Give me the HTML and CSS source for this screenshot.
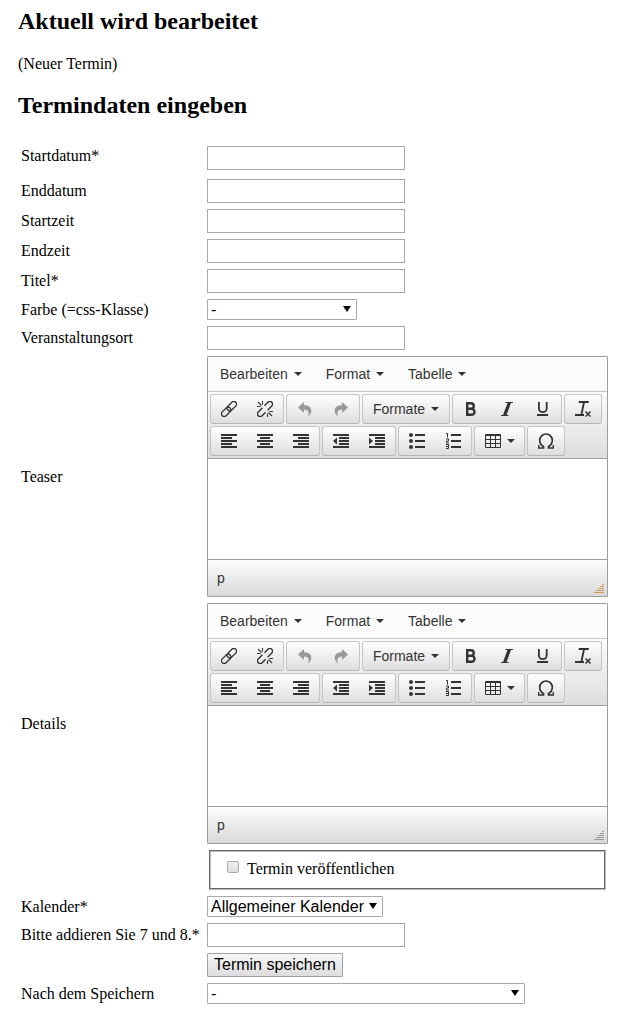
FILE: index.html
```html
<!DOCTYPE html>
<html lang="de">
<head>
<meta charset="utf-8">
<title>Termin bearbeiten</title>
<link rel="stylesheet" href="styles.css">
</head>
<body>
<svg class="sprite" aria-hidden="true">
  <symbol id="i-link" viewBox="0 0 16 16"><g fill="none" stroke="currentColor" stroke-width="1.3" transform="rotate(-45 8 8)"><rect x="-1.500" y="5.300" width="11" height="5.400" rx="2.700"/><rect x="6.500" y="5.300" width="11" height="5.400" rx="2.700"/></g></symbol>
  <symbol id="i-unlink" viewBox="0 0 16 16"><g fill="none" stroke="currentColor" stroke-width="1.400"><g transform="rotate(-45 8 8)"><path d="M7 5.300H1.200a2.700 2.700 0 0 0 0 5.400H6M10 5.300h4.800a2.700 2.700 0 0 1 0 5.400H9"/></g><path stroke-width="1.100" d="M5.500 0v3.500M1 1l3.500 3.500M0 5.500h3.500M10.500 16v-3.500M15 15l-3.500-3.500M16 10.500h-3.500"/></g></symbol>
  <symbol id="i-undo" viewBox="0 0 16 16"><path fill="currentColor" d="M7 1v3.200c5 0 8 2.600 7.200 6.600C13.800 13 12.500 14.500 11 15.500c1.500-3.500.8-6.700-4-6.900V12L1 6.500z"/></symbol>
  <symbol id="i-redo" viewBox="0 0 16 16"><path fill="currentColor" d="M9 1v3.200c-5 0-8 2.600-7.200 6.600C2.200 13 3.500 14.500 5 15.500c-1.500-3.500-.8-6.700 4-6.900V12l6-5.500z"/></symbol>
  <symbol id="i-bold" viewBox="0 0 16 16"><path fill="none" stroke="currentColor" stroke-width="2.400" d="M4.200 2.200v11.600h4.300a3 3 0 0 0 0-6.100H4.200h3.800a2.700 2.700 0 0 0 0-5.500z"/></symbol>
  <symbol id="i-italic" viewBox="0 0 16 16"><path fill="currentColor" d="M6.500 1H14v1h-2L7.500 14h2v1H2v-1h2L8.500 2h-2z"/></symbol>
  <symbol id="i-underline" viewBox="0 0 16 16"><path fill="none" stroke="currentColor" stroke-width="1.800" d="M3.900 1v6.500a3.900 3.600 0 0 0 7.800 0V1"/><path fill="currentColor" d="M2 13h11v2H2z"/></symbol>
  <symbol id="i-clear" viewBox="0 0 16 16"><path fill="currentColor" d="M4 0h10l-.5 2H9.800L7.500 13H5.600L7.900 2H3.500zM0 13h9v2H0z"/><path fill="none" stroke="currentColor" stroke-width="1.500" d="M10.500 10.500l5 5M15.500 10.500l-5 5"/></symbol>
  <symbol id="i-left" viewBox="0 0 16 16"><path fill="currentColor" d="M0 1h16v2H0zM0 4h11v2H0zM0 7h16v2H0zM0 10h11v2H0zM0 13h16v2H0z"/></symbol>
  <symbol id="i-center" viewBox="0 0 16 16"><path fill="currentColor" d="M0 1h16v2H0zM3 4h10v2H3zM0 7h16v2H0zM3 10h10v2H3zM0 13h16v2H0z"/></symbol>
  <symbol id="i-right" viewBox="0 0 16 16"><path fill="currentColor" d="M0 1h16v2H0zM5 4h11v2H5zM0 7h16v2H0zM5 10h11v2H5zM0 13h16v2H0z"/></symbol>
  <symbol id="i-outdent" viewBox="0 0 16 16"><path fill="currentColor" d="M0 1h16v2H0zM6 4h10v2H6zM6 7h10v2H6zM6 10h10v2H6zM0 13h16v2H0zM4 4.500v7L0 8z"/></symbol>
  <symbol id="i-indent" viewBox="0 0 16 16"><path fill="currentColor" d="M0 1h16v2H0zM6 4h10v2H6zM6 7h10v2H6zM6 10h10v2H6zM0 13h16v2H0zM0 4.500v7L4 8z"/></symbol>
  <symbol id="i-bullets" viewBox="0 0 16 16"><path fill="currentColor" d="M6 1h10v2H6zM6 7h10v2H6zM6 13h10v2H6z"/><g fill="currentColor"><circle cx="2" cy="2" r="2"/><circle cx="2" cy="8" r="2"/><circle cx="2" cy="14" r="2"/></g></symbol>
  <symbol id="i-numbers" viewBox="0 0 16 16"><path fill="currentColor" d="M6 1h10v2H6zM6 7h10v2H6zM6 13h10v2H6z"/><path fill="none" stroke="currentColor" d="M1 .5h1.500V4.500M1 6h2.500v2H1.500v2h2.500M1 11.500h2.500v4H1M1 13.500h2.500"/></symbol>
  <symbol id="i-table" viewBox="0 0 16 16"><path fill="none" stroke="currentColor" d="M.5 1.500h15v13H.5zM0 2.500h16M0 6.500h16M0 10.500h16M5.500 2v12M10.500 2v12"/></symbol>
  <symbol id="i-omega" viewBox="0 0 16 16"><path fill="none" stroke="currentColor" stroke-width="1.700" d="M.5 12v3H5.500v-1.500C3.100 12.200 1.700 10 1.700 7.200a6.300 6.200 0 0 1 12.600 0c0 2.800-1.400 5-3.800 6.300V15h5v-3"/></symbol>
  <symbol id="i-grip" viewBox="0 0 10 10"><path fill="currentColor" d="M8 0h2v1H8zM6 2h4v1H6zM4 4h6v1H4zM2 6h8v1H2zM0 8h10v1H0z"/></symbol>
</svg>

<main class="page">
  <h2>Aktuell wird bearbeitet</h2>
  <p>(Neuer Termin)</p>
  <h2>Termindaten eingeben</h2>

  <form class="form">
    <label class="date" for="startdatum">Startdatum*</label>
    <div class="date"><input class="text" id="startdatum" type="text"></div>
    <label for="enddatum">Enddatum</label>
    <div><input class="text" id="enddatum" type="text"></div>
    <label for="startzeit">Startzeit</label>
    <div><input class="text" id="startzeit" type="text"></div>
    <label for="endzeit">Endzeit</label>
    <div><input class="text" id="endzeit" type="text"></div>
    <label for="titel">Titel*</label>
    <div><input class="text" id="titel" type="text"></div>
    <label for="farbe">Farbe (=css-Klasse)</label>
    <div class="pick color"><select id="farbe"><option>-</option></select></div>
    <label for="ort">Veranstaltungsort</label>
    <div><input class="text" id="ort" type="text"></div>

    <label for="teaser">Teaser</label>
    <div class="editor">
      <div class="menubar">
        <button type="button" class="caret">Bearbeiten</button>
        <button type="button" class="caret">Format</button>
        <button type="button" class="caret">Tabelle</button>
      </div>
      <div class="toolbar">
        <div class="tools">
          <div class="group">
            <button type="button" aria-label="Link"><svg><use href="#i-link"/></svg></button>
            <button type="button" aria-label="Link entfernen"><svg><use href="#i-unlink"/></svg></button>
          </div>
          <div class="group">
            <button type="button" disabled aria-label="Rückgängig"><svg><use href="#i-undo"/></svg></button>
            <button type="button" disabled aria-label="Wiederholen"><svg><use href="#i-redo"/></svg></button>
          </div>
          <div class="group"><button type="button" class="caret formats">Formate</button></div>
          <div class="group">
            <button type="button" aria-label="Fett"><svg><use href="#i-bold"/></svg></button>
            <button type="button" aria-label="Kursiv"><svg><use href="#i-italic"/></svg></button>
            <button type="button" aria-label="Unterstrichen"><svg><use href="#i-underline"/></svg></button>
          </div>
          <div class="group"><button type="button" aria-label="Formatierung entfernen"><svg><use href="#i-clear"/></svg></button></div>
        </div>
        <div class="tools">
          <div class="group">
            <button type="button" aria-label="Linksbündig"><svg><use href="#i-left"/></svg></button>
            <button type="button" aria-label="Zentriert"><svg><use href="#i-center"/></svg></button>
            <button type="button" aria-label="Rechtsbündig"><svg><use href="#i-right"/></svg></button>
          </div>
          <div class="group">
            <button type="button" aria-label="Einzug verkleinern"><svg><use href="#i-outdent"/></svg></button>
            <button type="button" aria-label="Einzug vergrößern"><svg><use href="#i-indent"/></svg></button>
          </div>
          <div class="group">
            <button type="button" aria-label="Aufzählung"><svg><use href="#i-bullets"/></svg></button>
            <button type="button" aria-label="Nummerierte Liste"><svg><use href="#i-numbers"/></svg></button>
          </div>
          <div class="group"><button type="button" class="caret grid" aria-label="Tabelle"><svg><use href="#i-table"/></svg></button></div>
          <div class="group"><button type="button" aria-label="Sonderzeichen"><svg><use href="#i-omega"/></svg></button></div>
        </div>
      </div>
      <textarea id="teaser"></textarea>
      <div class="status"><span>p</span><svg class="grip warm"><use href="#i-grip"/></svg></div>
    </div>

    <label for="details">Details</label>
    <div class="editor">
      <div class="menubar">
        <button type="button" class="caret">Bearbeiten</button>
        <button type="button" class="caret">Format</button>
        <button type="button" class="caret">Tabelle</button>
      </div>
      <div class="toolbar">
        <div class="tools">
          <div class="group">
            <button type="button" aria-label="Link"><svg><use href="#i-link"/></svg></button>
            <button type="button" aria-label="Link entfernen"><svg><use href="#i-unlink"/></svg></button>
          </div>
          <div class="group">
            <button type="button" disabled aria-label="Rückgängig"><svg><use href="#i-undo"/></svg></button>
            <button type="button" disabled aria-label="Wiederholen"><svg><use href="#i-redo"/></svg></button>
          </div>
          <div class="group"><button type="button" class="caret formats">Formate</button></div>
          <div class="group">
            <button type="button" aria-label="Fett"><svg><use href="#i-bold"/></svg></button>
            <button type="button" aria-label="Kursiv"><svg><use href="#i-italic"/></svg></button>
            <button type="button" aria-label="Unterstrichen"><svg><use href="#i-underline"/></svg></button>
          </div>
          <div class="group"><button type="button" aria-label="Formatierung entfernen"><svg><use href="#i-clear"/></svg></button></div>
        </div>
        <div class="tools">
          <div class="group">
            <button type="button" aria-label="Linksbündig"><svg><use href="#i-left"/></svg></button>
            <button type="button" aria-label="Zentriert"><svg><use href="#i-center"/></svg></button>
            <button type="button" aria-label="Rechtsbündig"><svg><use href="#i-right"/></svg></button>
          </div>
          <div class="group">
            <button type="button" aria-label="Einzug verkleinern"><svg><use href="#i-outdent"/></svg></button>
            <button type="button" aria-label="Einzug vergrößern"><svg><use href="#i-indent"/></svg></button>
          </div>
          <div class="group">
            <button type="button" aria-label="Aufzählung"><svg><use href="#i-bullets"/></svg></button>
            <button type="button" aria-label="Nummerierte Liste"><svg><use href="#i-numbers"/></svg></button>
          </div>
          <div class="group"><button type="button" class="caret grid" aria-label="Tabelle"><svg><use href="#i-table"/></svg></button></div>
          <div class="group"><button type="button" aria-label="Sonderzeichen"><svg><use href="#i-omega"/></svg></button></div>
        </div>
      </div>
      <textarea id="details"></textarea>
      <div class="status"><span>p</span><svg class="grip"><use href="#i-grip"/></svg></div>
    </div>

    <fieldset class="publish">
      <input id="publish" type="checkbox"><label for="publish">Termin veröffentlichen</label>
    </fieldset>

    <label for="kalender">Kalender*</label>
    <div class="pick calendar"><select id="kalender"><option>Allgemeiner Kalender</option></select></div>
    <label for="summe">Bitte addieren Sie 7 und 8.*</label>
    <div><input class="text" id="summe" type="text"></div>
    <button class="save" type="submit">Termin speichern</button>
    <label for="danach">Nach dem Speichern</label>
    <div class="pick after"><select id="danach"><option>-</option></select></div>
  </form>
</main>
</body>
</html>
```

FILE: styles.css
```css
* { box-sizing: border-box; }

body {
  margin: 0;
  background: #fff;
  color: #000;
  font: 16px/18px "Liberation Serif", "Times New Roman", serif;
}

.sprite { display: none; }

.page { padding: 8px 16px 23px 18px; }

h2 { margin: 0; font-size: 24px; line-height: 27px; }
p { margin: 20px 0 19px; }
p + h2 { margin-bottom: 27px; }

.form {
  display: grid;
  grid-template-columns: 180px minmax(0, 1fr);
  gap: 6px;
  align-items: center;
  padding-left: 3px;
}

.form > label { white-space: nowrap; }
.form > label.date { padding-bottom: 8px; }
.form > div.date { padding-bottom: 3px; }

.text {
  display: block;
  width: 198px;
  max-width: 100%;
  height: 24px;
  padding: 1px 4px;
  border: 1px solid #a9a9a9;
  background: #fff;
  font: 16px/18px "Liberation Sans", Arial, sans-serif;
}

.pick { position: relative; }
.pick::after {
  content: "";
  position: absolute;
  top: 7px;
  right: 6px;
  border: 4px solid transparent;
  border-top: 6px solid #000;
  border-bottom: 0;
  pointer-events: none;
}
.pick select {
  display: block;
  appearance: none;
  width: 100%;
  height: 21px;
  padding: 0 3px;
  border: 1px solid #a9a9a9;
  border-radius: 1px;
  background: #fff;
  color: #000;
  font: 16px/19px "Liberation Sans", Arial, sans-serif;
}
.color { width: 150px; }
.calendar { width: 176px; }
.after { width: 318px; }

.editor {
  max-width: 401px;
  border: 1px solid #9e9e9e;
  border-radius: 1px;
  color: #333;
  font: 14px/20px "Liberation Sans", Arial, sans-serif;
}
.editor button {
  display: flex;
  align-items: center;
  justify-content: center;
  width: 36px;
  height: 28px;
  padding: 0;
  border: 0;
  background: none;
  color: #333;
  font: inherit;
}
.editor button:disabled { color: #999; }
.editor button svg { width: 16px; height: 16px; }

.editor .caret { gap: 6px; width: auto; }
.caret::after {
  content: "";
  border: 4px solid transparent;
  border-top-color: #333;
  border-bottom: 0;
}

.menubar {
  display: flex;
  gap: 24px;
  padding: 3px 12px;
  border-bottom: 1px solid #c4c4c4;
  background: #fcfcfc;
}

.toolbar {
  display: grid;
  gap: 2px;
  padding: 2px;
  border-bottom: 1px solid #9e9e9e;
  background: linear-gradient(#fdfdfd, #ddd);
}
.tools { display: flex; gap: 2px; }
.group {
  display: flex;
  border: 1px solid #c5c5c5;
  border-bottom-color: #b5b5b5;
  border-radius: 3px;
  background: linear-gradient(#fff, #dedede);
}
.editor .formats { width: 86px; }
.editor .grid { width: 49px; }

.editor textarea {
  display: block;
  width: 100%;
  height: 100px;
  padding: 8px;
  border: 0;
  outline: 0;
  resize: none;
  font: inherit;
}

.status {
  display: flex;
  align-items: flex-end;
  justify-content: space-between;
  padding: 8px 3px 2px 9px;
  border-top: 1px solid #9e9e9e;
  background: linear-gradient(#fdfdfd, #d9d9d9);
}
.status span { padding-bottom: 6px; }
.grip { width: 10px; height: 10px; color: #999; }
.warm { color: #d59b5a; }

.publish {
  grid-column: 2;
  display: flex;
  gap: 8px;
  max-width: 397px;
  margin: 0 2px;
  padding: 8px 16px 10px;
  border: 2px groove #bbb;
}
.publish input {
  appearance: none;
  width: 12px;
  height: 12px;
  margin: 1px 0;
  border: 1px solid #aaa;
  border-radius: 2px;
  background: linear-gradient(#eee, #ddd);
}

.save {
  grid-column: 2;
  justify-self: start;
  height: 24px;
  padding: 0 6px;
  border: 1px solid #a0a0a0;
  border-radius: 1px;
  background: linear-gradient(#f7f7f7, #ddd);
  color: #000;
  font: 16px/20px "Liberation Sans", Arial, sans-serif;
}
```
